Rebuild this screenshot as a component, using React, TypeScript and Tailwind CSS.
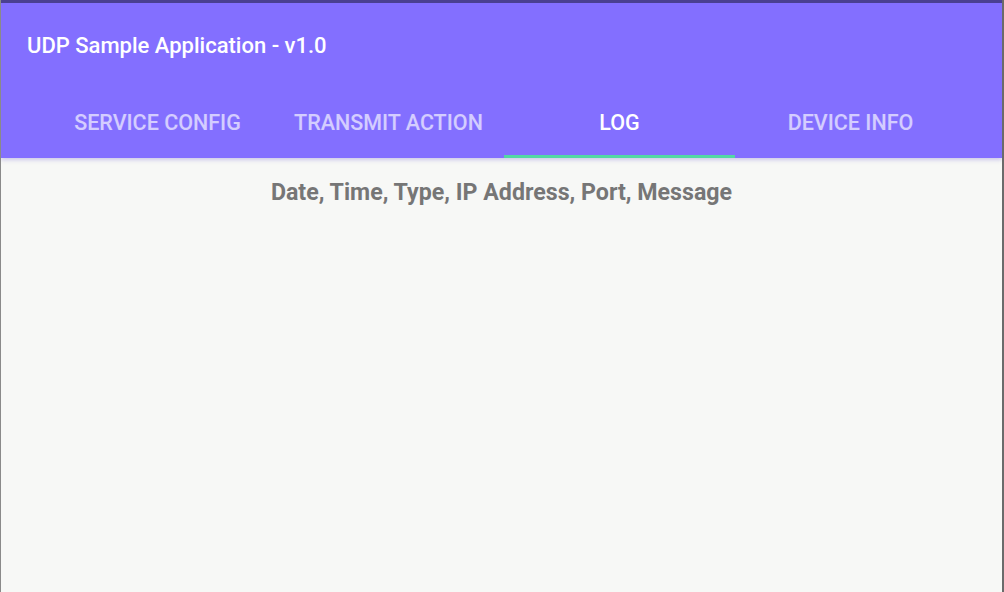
import React, { useState } from 'react'

const tabs = ['Service Config', 'Transmit Action', 'Log', 'Device Info']

export default function App() {
    const [active, setActive] = useState(2)

    return (
        <div className="w-[1004px] h-[592px] flex flex-col bg-[#f7f8f6] overflow-hidden border-l border-[#8a8a8a] border-r-2 border-r-[#6b6b6b]" style={{ fontFamily: 'Roboto, "Noto Sans", sans-serif' }}>
            {/* Status strip */}
            <div className="h-[3px] bg-[#4b4191] shrink-0" />

            {/* App bar + tabs */}
            <header className="bg-[#836fff] shrink-0 shadow-[0_2px_4px_rgba(80,60,200,0.25)] relative z-10">
                <div className="h-[85px] flex items-center pl-[26px]">
                    <h1 className="text-white text-[22px] font-medium">UDP Sample Application - v1.0</h1>
                </div>
                <nav className="flex pl-[41px] h-[70px]">
                    {tabs.map((t, i) => (
                        <button
                            key={t}
                            onClick={() => setActive(i)}
                            className={`w-[231px] flex items-center justify-center uppercase text-[21.5px] font-medium relative ${i === active ? 'text-white' : 'text-white/65'}`}
                        >
                            <span>{t}</span>
                            {i === active && <span className="absolute left-0 right-0 bottom-0 h-[3px] bg-[#52d8a4]" />}
                        </button>
                    ))}
                </nav>
            </header>

            {/* Log content */}
            <main className="flex-1">
                <p className="text-center text-[#767676] text-[23.2px] font-bold pt-[17px]">
                    Date, Time, Type, IP Address, Port, Message
                </p>
            </main>
        </div>
    )
}
